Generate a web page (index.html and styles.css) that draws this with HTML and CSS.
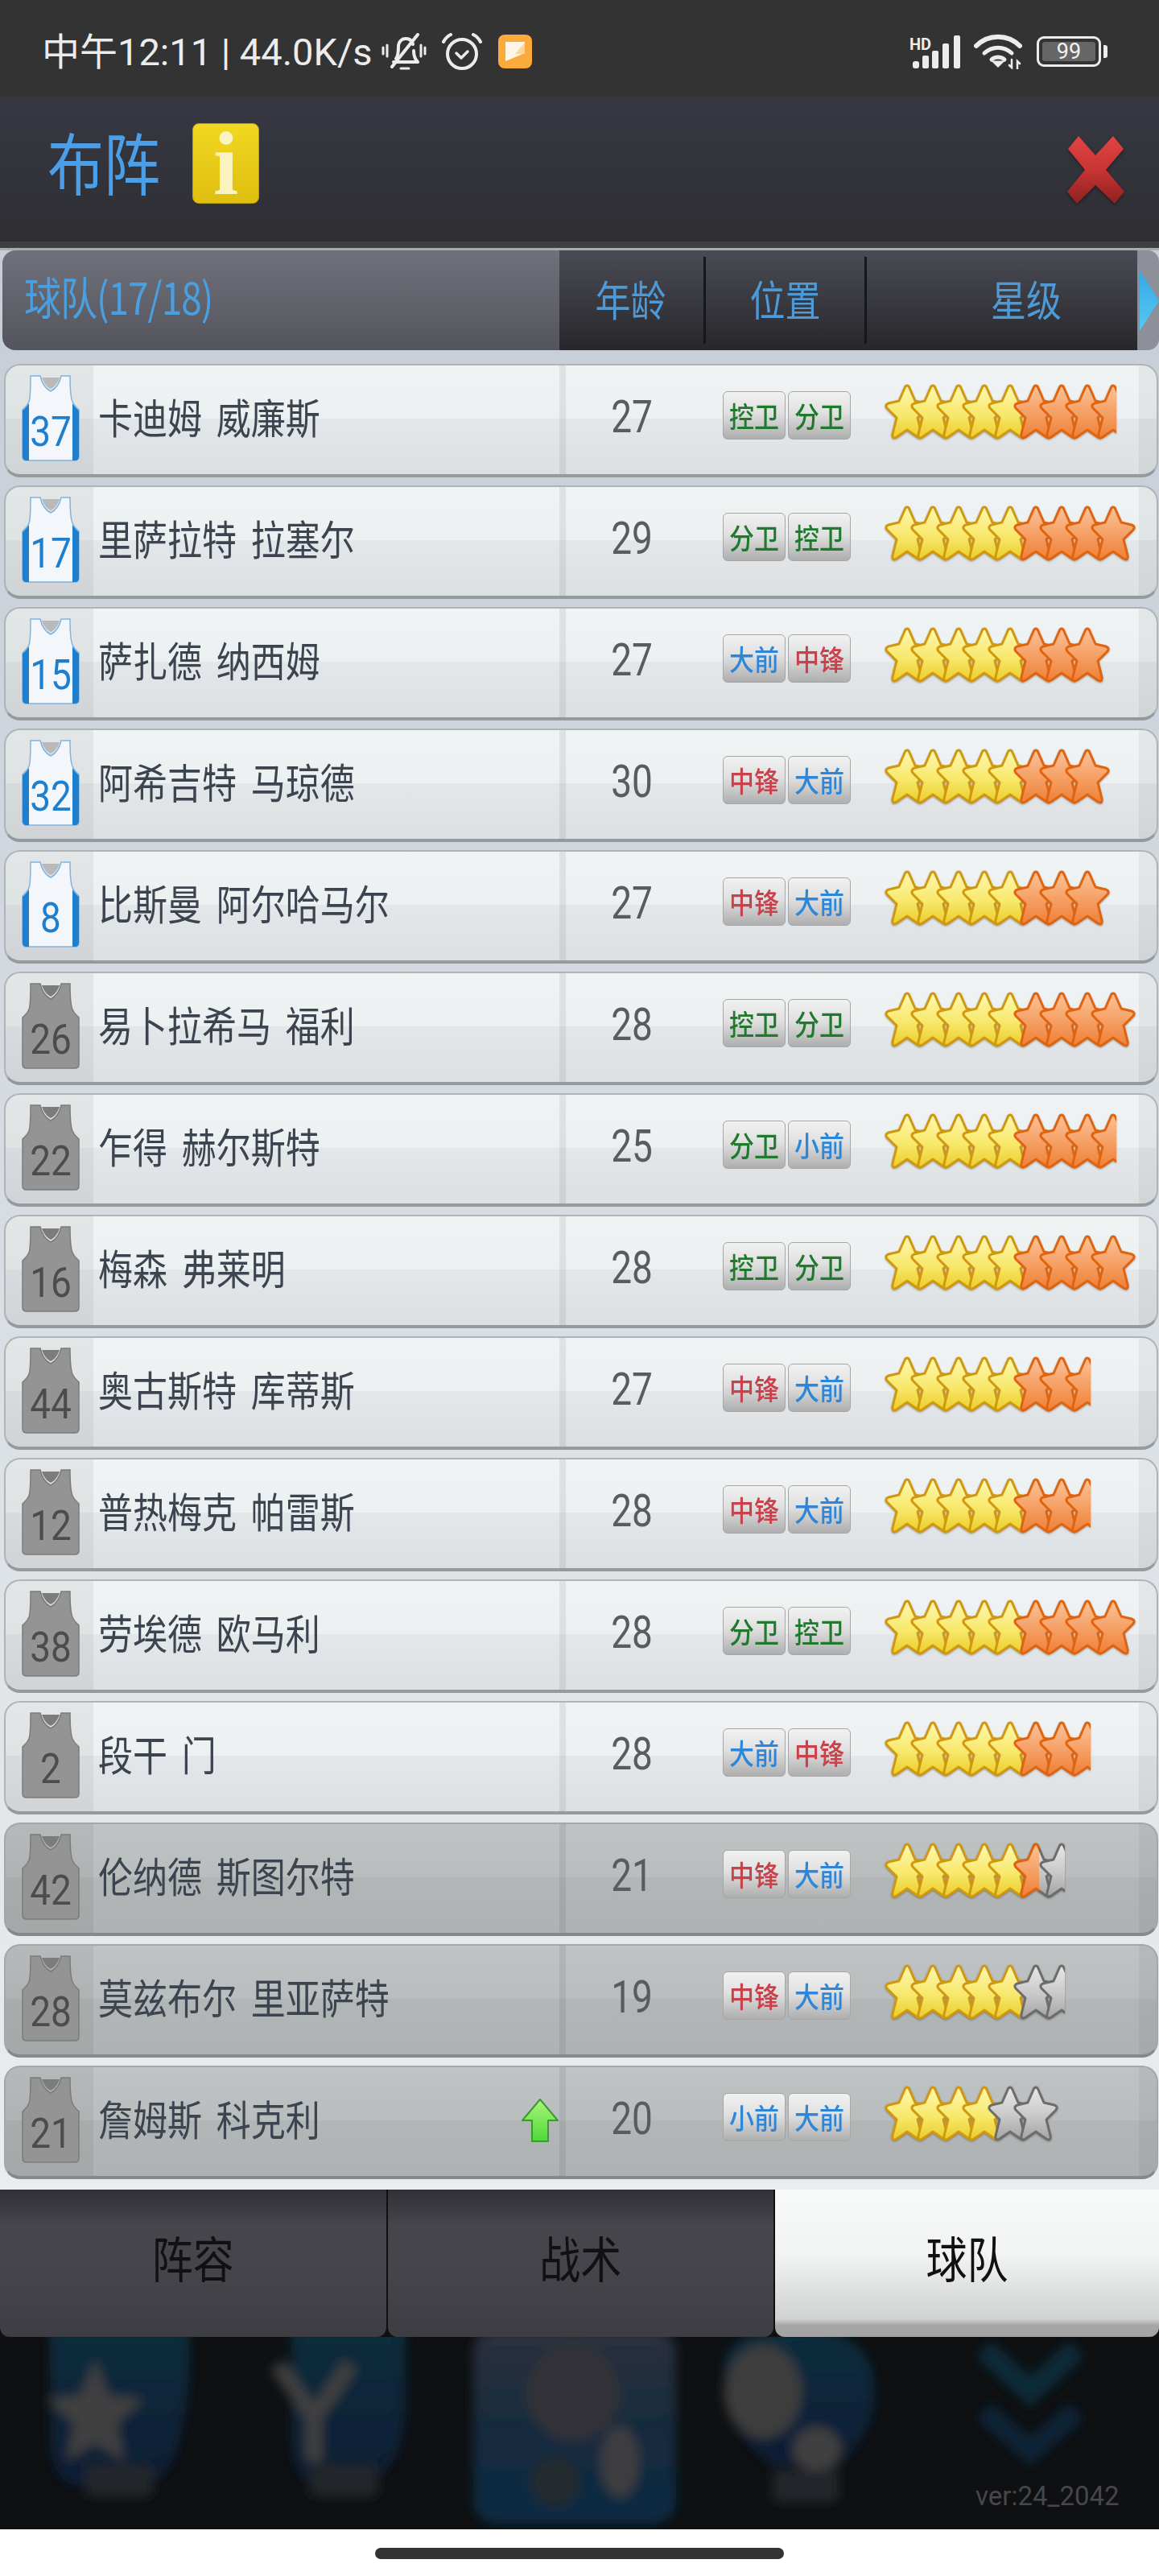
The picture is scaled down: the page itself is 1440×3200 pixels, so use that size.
FILE: index.html
```html
<!DOCTYPE html>
<html lang="zh-CN">
<head>
    <meta charset="UTF-8">
    <meta name="viewport" content="width=device-width, initial-scale=1.0">
    <title>布阵</title>
    <link rel="stylesheet" href="styles.css">
</head>
<body>
    <!-- shared star and jersey shapes -->
    <svg class="defs" width="0" height="0">
        <defs>
            <linearGradient id="gy" x1="0" y1="0" x2="0" y2="1"><stop offset="0" stop-color="#fef8ae"/><stop offset=".55" stop-color="#f8e86c"/><stop offset="1" stop-color="#ebcd2a"/></linearGradient>
            <linearGradient id="go" x1="0" y1="0" x2="0" y2="1"><stop offset="0" stop-color="#fcc298"/><stop offset=".55" stop-color="#f59e62"/><stop offset="1" stop-color="#ee8038"/></linearGradient>
            <linearGradient id="gg" x1="0" y1="0" x2="0" y2="1"><stop offset="0" stop-color="#e8e8e8"/><stop offset=".55" stop-color="#c8c8c8"/><stop offset="1" stop-color="#a4a4a4"/></linearGradient>
            <clipPath id="half"><rect x="-2" y="-2" width="33" height="74"/></clipPath>
            <path id="star" d="M27 1Q29 1 30 4L37 20L50 23Q55 25 52 29L40 41L45 61Q46 68 40 65L27 56L14 65Q8 68 9 61L14 41L2 29Q-1 25 4 23L17 20L24 4Q25 1 27 1Z" stroke-width="3" stroke-linejoin="round"/>
            <use id="sy" href="#star" fill="url(#gy)" stroke="#d09810"/>
            <use id="so" href="#star" fill="url(#go)" stroke="#e0640f"/>
            <use id="sg" href="#star" fill="url(#gg)" stroke="#6c6c6c"/>
            <use id="ho" href="#so" clip-path="url(#half)"/>
            <use id="hg" href="#sg" clip-path="url(#half)"/>
            <g id="y4"><use href="#sy"/><use href="#sy" x="32"/><use href="#sy" x="64"/><use href="#sy" x="96"/></g>
            <g id="y5"><use href="#y4"/><use href="#sy" x="128"/></g>
            <g id="o2"><use href="#so" x="160"/><use href="#so" x="192"/></g>
            <g id="o3"><use href="#o2"/><use href="#so" x="224"/></g>
            <path id="shirt" d="M11 1H23C25 10 30 17 36 20C42 17 47 10 49 1H60C60 18 61 28 63 33C65 38 68 40 71 43V101Q71 106 66 106H6Q1 106 1 101V43C4 40 7 38 9 33C11 28 11 18 11 1Z"/>
            <path id="neck" d="M25 3H47C45 9 41 15 36 17C31 15 27 9 25 3Z"/>
            <g id="jw">
                <use href="#shirt" fill="#f3f7fb" stroke="#7fb4e2" stroke-width="1.5"/>
                <use href="#neck" fill="#b9b9b9"/>
                <path d="M1 44C4 41 6 39 9 35V106H6Q1 106 1 101ZM71 44C68 41 66 39 63 35V106H66Q71 106 71 101Z" fill="#1f7fcf"/>
            </g>
            <g id="jg">
                <use href="#shirt" fill="#949494" stroke="#7b7b7b" stroke-width="1.5"/>
                <use href="#neck" fill="#7c7c7c"/>
            </g>
        </defs>
    </svg>

    <div class="status">
        <div class="status-left">
            <span class="clock">中午12:11 | 44.0K/s</span>
            <svg class="ic-bell" viewBox="0 0 56 46" fill="none" stroke="#ececec" stroke-width="4" stroke-linecap="round" stroke-linejoin="round">
                <path d="M18 32C21 28 21 22 21 17C21 11 25 7 30 7C35 7 38 10 39 14M40 22C40 27 41 32 45 36H15"/>
                <path d="M24 44H34" stroke-width="3"/>
                <path d="M45 2L13 42"/>
                <path d="M2 18V26M7 15V29M49 15V29M54 18V26" stroke-width="3"/>
            </svg>
            <svg class="ic-alarm" viewBox="0 0 50 47" fill="none" stroke="#ececec" stroke-width="4" stroke-linecap="round" stroke-linejoin="round">
                <circle cx="25" cy="26" r="18"/>
                <path d="M18 25L24 31L32 23" stroke-width="3.5"/>
                <path d="M2 11C4 7 7 4 11 2M48 11C46 7 43 4 39 2"/>
            </svg>
            <svg class="ic-note" viewBox="0 0 42 42">
                <rect width="42" height="42" rx="8" fill="#fdaa3c"/>
                <path d="M9 9H33V23L9 33Z" fill="#fdf6e6"/>
                <path d="M33 10V24H21Z" fill="#fcd59a"/>
            </svg>
        </div>
        <div class="status-right">
            <svg class="ic-signal" viewBox="0 0 64 42" fill="#ececec">
                <text class="hd" x="0" y="19">HD</text>
                <rect x="4" y="33" width="8" height="9" rx="3"/>
                <rect x="16" y="26" width="8" height="16" rx="2"/>
                <rect x="28" y="20" width="8" height="22" rx="2"/>
                <rect x="41" y="11" width="8" height="31" rx="2"/>
                <rect x="55" y="1" width="8" height="41" rx="2"/>
            </svg>
            <svg class="ic-wifi" viewBox="0 0 60 44" fill="none" stroke="#ececec" stroke-linecap="round">
                <path d="M3 15C18 0 42 0 57 15" stroke-width="6"/>
                <path d="M13 24C23 15 37 15 47 24" stroke-width="5"/>
                <path d="M22 32C26 28 34 28 38 32" stroke-width="5"/>
                <path d="M30 40L25 35H35Z" fill="#ececec" stroke-width="3"/>
                <path d="M47 32V42L44 39M54 44V34L57 37" stroke-width="2.5"/>
            </svg>
            <div class="battery"><span class="battery-level">99</span></div>
            <div class="battery-nub"></div>
        </div>
    </div>

    <div class="topbar">
        <h1 class="title"><span class="tall">布阵</span></h1>
        <div class="info"><span>i</span></div>
        <svg class="close" viewBox="0 0 71 86">
            <defs><linearGradient id="gx" x1="0" y1="0" x2="0" y2="1"><stop offset="0" stop-color="#e24343"/><stop offset=".5" stop-color="#c93434"/><stop offset="1" stop-color="#8e2020"/></linearGradient></defs>
            <polygon points="14,1 35,25 57,1 70,17 48,43 71,70 59,85 35,62 12,85 0,70 22,43 1,17" fill="url(#gx)"/>
        </svg>
    </div>

    <div class="panel">
        <div class="thead">
            <div class="thead-title"><span class="tall">球队(17/18)</span></div>
            <div class="thead-cols">
                <div class="th th-age"><span class="tall">年龄</span></div>
                <div class="th th-pos"><span class="tall">位置</span></div>
                <div class="th th-star"><span class="tall">星级</span></div>
            </div>
            <div class="thead-end"><div class="arrow"></div></div>
        </div>

        <div class="rows">
            <div class="row">
                <div class="c-jersey"><svg class="jersey on" viewBox="0 0 72 107"><use href="#jw"/><text>37</text></svg></div>
                <div class="c-name"><span class="tall">卡迪姆 威廉斯</span></div>
                <div class="c-age"><span class="tall">27</span></div>
                <div class="c-tags"><span class="tag green"><b>控卫</b></span><span class="tag green"><b>分卫</b></span></div>
                <div class="c-stars"><svg class="stars" viewBox="0 0 322 70"><use href="#y5"/><use href="#o3"/><use href="#ho" x="256"/></svg></div>
            </div>
            <div class="row">
                <div class="c-jersey"><svg class="jersey on" viewBox="0 0 72 107"><use href="#jw"/><text>17</text></svg></div>
                <div class="c-name"><span class="tall">里萨拉特 拉塞尔</span></div>
                <div class="c-age"><span class="tall">29</span></div>
                <div class="c-tags"><span class="tag green"><b>分卫</b></span><span class="tag green"><b>控卫</b></span></div>
                <div class="c-stars"><svg class="stars" viewBox="0 0 322 70"><use href="#y5"/><use href="#o3"/><use href="#so" x="256"/></svg></div>
            </div>
            <div class="row">
                <div class="c-jersey"><svg class="jersey on" viewBox="0 0 72 107"><use href="#jw"/><text>15</text></svg></div>
                <div class="c-name"><span class="tall">萨扎德 纳西姆</span></div>
                <div class="c-age"><span class="tall">27</span></div>
                <div class="c-tags"><span class="tag blue"><b>大前</b></span><span class="tag red"><b>中锋</b></span></div>
                <div class="c-stars"><svg class="stars" viewBox="0 0 322 70"><use href="#y5"/><use href="#o3"/></svg></div>
            </div>
            <div class="row">
                <div class="c-jersey"><svg class="jersey on" viewBox="0 0 72 107"><use href="#jw"/><text>32</text></svg></div>
                <div class="c-name"><span class="tall">阿希吉特 马琼德</span></div>
                <div class="c-age"><span class="tall">30</span></div>
                <div class="c-tags"><span class="tag red"><b>中锋</b></span><span class="tag blue"><b>大前</b></span></div>
                <div class="c-stars"><svg class="stars" viewBox="0 0 322 70"><use href="#y5"/><use href="#o3"/></svg></div>
            </div>
            <div class="row">
                <div class="c-jersey"><svg class="jersey on" viewBox="0 0 72 107"><use href="#jw"/><text>8</text></svg></div>
                <div class="c-name"><span class="tall">比斯曼 阿尔哈马尔</span></div>
                <div class="c-age"><span class="tall">27</span></div>
                <div class="c-tags"><span class="tag red"><b>中锋</b></span><span class="tag blue"><b>大前</b></span></div>
                <div class="c-stars"><svg class="stars" viewBox="0 0 322 70"><use href="#y5"/><use href="#o3"/></svg></div>
            </div>
            <div class="row">
                <div class="c-jersey"><svg class="jersey" viewBox="0 0 72 107"><use href="#jg"/><text>26</text></svg></div>
                <div class="c-name"><span class="tall">易卜拉希马 福利</span></div>
                <div class="c-age"><span class="tall">28</span></div>
                <div class="c-tags"><span class="tag green"><b>控卫</b></span><span class="tag green"><b>分卫</b></span></div>
                <div class="c-stars"><svg class="stars" viewBox="0 0 322 70"><use href="#y5"/><use href="#o3"/><use href="#so" x="256"/></svg></div>
            </div>
            <div class="row">
                <div class="c-jersey"><svg class="jersey" viewBox="0 0 72 107"><use href="#jg"/><text>22</text></svg></div>
                <div class="c-name"><span class="tall">乍得 赫尔斯特</span></div>
                <div class="c-age"><span class="tall">25</span></div>
                <div class="c-tags"><span class="tag green"><b>分卫</b></span><span class="tag blue"><b>小前</b></span></div>
                <div class="c-stars"><svg class="stars" viewBox="0 0 322 70"><use href="#y5"/><use href="#o3"/><use href="#ho" x="256"/></svg></div>
            </div>
            <div class="row">
                <div class="c-jersey"><svg class="jersey" viewBox="0 0 72 107"><use href="#jg"/><text>16</text></svg></div>
                <div class="c-name"><span class="tall">梅森 弗莱明</span></div>
                <div class="c-age"><span class="tall">28</span></div>
                <div class="c-tags"><span class="tag green"><b>控卫</b></span><span class="tag green"><b>分卫</b></span></div>
                <div class="c-stars"><svg class="stars" viewBox="0 0 322 70"><use href="#y5"/><use href="#o3"/><use href="#so" x="256"/></svg></div>
            </div>
            <div class="row">
                <div class="c-jersey"><svg class="jersey" viewBox="0 0 72 107"><use href="#jg"/><text>44</text></svg></div>
                <div class="c-name"><span class="tall">奥古斯特 库蒂斯</span></div>
                <div class="c-age"><span class="tall">27</span></div>
                <div class="c-tags"><span class="tag red"><b>中锋</b></span><span class="tag blue"><b>大前</b></span></div>
                <div class="c-stars"><svg class="stars" viewBox="0 0 322 70"><use href="#y5"/><use href="#o2"/><use href="#ho" x="224"/></svg></div>
            </div>
            <div class="row">
                <div class="c-jersey"><svg class="jersey" viewBox="0 0 72 107"><use href="#jg"/><text>12</text></svg></div>
                <div class="c-name"><span class="tall">普热梅克 帕雷斯</span></div>
                <div class="c-age"><span class="tall">28</span></div>
                <div class="c-tags"><span class="tag red"><b>中锋</b></span><span class="tag blue"><b>大前</b></span></div>
                <div class="c-stars"><svg class="stars" viewBox="0 0 322 70"><use href="#y5"/><use href="#o2"/><use href="#ho" x="224"/></svg></div>
            </div>
            <div class="row">
                <div class="c-jersey"><svg class="jersey" viewBox="0 0 72 107"><use href="#jg"/><text>38</text></svg></div>
                <div class="c-name"><span class="tall">劳埃德 欧马利</span></div>
                <div class="c-age"><span class="tall">28</span></div>
                <div class="c-tags"><span class="tag green"><b>分卫</b></span><span class="tag green"><b>控卫</b></span></div>
                <div class="c-stars"><svg class="stars" viewBox="0 0 322 70"><use href="#y5"/><use href="#o3"/><use href="#so" x="256"/></svg></div>
            </div>
            <div class="row">
                <div class="c-jersey"><svg class="jersey" viewBox="0 0 72 107"><use href="#jg"/><text>2</text></svg></div>
                <div class="c-name"><span class="tall">段干 门</span></div>
                <div class="c-age"><span class="tall">28</span></div>
                <div class="c-tags"><span class="tag blue"><b>大前</b></span><span class="tag red"><b>中锋</b></span></div>
                <div class="c-stars"><svg class="stars" viewBox="0 0 322 70"><use href="#y5"/><use href="#o2"/><use href="#ho" x="224"/></svg></div>
            </div>
            <div class="row off">
                <div class="c-jersey"><svg class="jersey" viewBox="0 0 72 107"><use href="#jg"/><text>42</text></svg></div>
                <div class="c-name"><span class="tall">伦纳德 斯图尔特</span></div>
                <div class="c-age"><span class="tall">21</span></div>
                <div class="c-tags"><span class="tag red"><b>中锋</b></span><span class="tag blue"><b>大前</b></span></div>
                <div class="c-stars"><svg class="stars" viewBox="0 0 322 70"><use href="#y5"/><use href="#sg" x="160"/><use href="#ho" x="160"/><use href="#hg" x="192"/></svg></div>
            </div>
            <div class="row off">
                <div class="c-jersey"><svg class="jersey" viewBox="0 0 72 107"><use href="#jg"/><text>28</text></svg></div>
                <div class="c-name"><span class="tall">莫兹布尔 里亚萨特</span></div>
                <div class="c-age"><span class="tall">19</span></div>
                <div class="c-tags"><span class="tag red"><b>中锋</b></span><span class="tag blue"><b>大前</b></span></div>
                <div class="c-stars"><svg class="stars" viewBox="0 0 322 70"><use href="#y5"/><use href="#sg" x="160"/><use href="#hg" x="192"/></svg></div>
            </div>
            <div class="row off">
                <div class="c-jersey"><svg class="jersey" viewBox="0 0 72 107"><use href="#jg"/><text>21</text></svg></div>
                <div class="c-name">
                    <span class="tall">詹姆斯 科克利</span>
                    <svg class="up" viewBox="0 0 48 56">
                        <defs><linearGradient id="gu" x1="0" y1="0" x2="0" y2="1"><stop offset="0" stop-color="#a8f57a"/><stop offset="1" stop-color="#4fd93a"/></linearGradient></defs>
                        <path d="M24 2L46 28H34V54H14V28H2Z" fill="url(#gu)" stroke="#3b9a33" stroke-width="2" stroke-linejoin="round"/>
                    </svg>
                </div>
                <div class="c-age"><span class="tall">20</span></div>
                <div class="c-tags"><span class="tag blue"><b>小前</b></span><span class="tag blue"><b>大前</b></span></div>
                <div class="c-stars"><svg class="stars" viewBox="0 0 322 70"><use href="#y4"/><use href="#sg" x="128"/><use href="#sg" x="160"/></svg></div>
            </div>
        </div>
    </div>

    <div class="tabs">
        <div class="tab"><span class="tall">阵容</span></div>
        <div class="tab"><span class="tall">战术</span></div>
        <div class="tab active"><span class="tall">球队</span></div>
    </div>

    <div class="backdrop">
        <!-- blurred main menu behind the dialog -->
        <svg class="menu" viewBox="0 0 1440 239">
            <defs><filter id="blur" x="-10%" y="-10%" width="120%" height="120%"><feGaussianBlur stdDeviation="7"/></filter>
            <linearGradient id="gp" x1="0" y1="0" x2="0" y2="1"><stop offset="0" stop-color="#2c303c"/><stop offset=".5" stop-color="#172c3e"/><stop offset="1" stop-color="#0a2a44"/></linearGradient>
            <linearGradient id="gb" x1="0" y1="0" x2="0" y2="1"><stop offset="0" stop-color="#0b2e3e"/><stop offset="1" stop-color="#091c34"/></linearGradient></defs>
            <g filter="url(#blur)">
                <path d="M62 -10H235V50Q225 185 175 185H100Q62 185 62 120Z" fill="url(#gb)"/>
                <polygon points="118,28 135,72 178,78 145,108 155,155 118,132 82,155 92,108 58,78 100,72" fill="#3f3f3f"/>
                <rect x="105" y="158" width="85" height="40" rx="8" fill="#22252a"/>
                <path d="M362 -10H504V90Q500 185 430 185H400Q362 185 362 120Z" fill="url(#gb)"/>
                <path d="M345 35L390 100L435 35M390 100V155" fill="none" stroke="#3f3f3f" stroke-width="20"/>
                <rect x="385" y="158" width="85" height="40" rx="8" fill="#22252a"/>
                <rect x="588" y="-10" width="252" height="242" rx="28" fill="url(#gp)"/>
                <ellipse cx="712" cy="70" rx="58" ry="60" fill="#303338"/>
                <ellipse cx="770" cy="155" rx="24" ry="44" fill="#3c3e40"/>
                <ellipse cx="690" cy="180" rx="30" ry="32" fill="#23292f"/>
                <path d="M900 40Q900 -10 990 -10Q1087 -10 1087 70Q1087 120 1040 160H960Q900 120 900 40Z" fill="url(#gb)"/>
                <ellipse cx="948" cy="68" rx="48" ry="58" fill="#3e3e3e"/>
                <ellipse cx="1015" cy="140" rx="30" ry="28" fill="#404040"/>
                <rect x="960" y="165" width="82" height="40" rx="8" fill="#22252a"/>
                <path d="M1222 15L1280 68L1338 15" fill="none" stroke="#0a2c38" stroke-width="28"/>
                <path d="M1222 92L1280 142L1338 92" fill="none" stroke="#092434" stroke-width="28"/>
            </g>
        </svg>
        <span class="version">ver:24_2042</span>
    </div>

    <div class="homebar"><div class="pill"></div></div>
</body>
</html>
```

FILE: styles.css
```css
* {
    box-sizing: border-box;
}

body {
    margin: 0;
    width: 1440px;
    height: 3200px;
    overflow: hidden;
    background: #fff;
    font-family: "Noto Sans CJK SC", "Noto Sans", sans-serif;
}

.defs {
    position: absolute;
}

/* the game stretches its text vertically */
.tall {
    display: inline-block;
    transform: scaleY(1.2);
    white-space: nowrap;
}

/* status bar */
.status {
    height: 120px;
    background: #333;
    display: flex;
    justify-content: space-between;
    align-items: center;
    padding: 8px 64px 0 52px;
    color: #ececec;
}

.status-left, .status-right {
    display: flex;
    align-items: center;
}

.clock {
    font-family: Roboto, "Noto Sans CJK SC", sans-serif;
    font-size: 47px;
    line-height: 1;
    white-space: nowrap;
}

.ic-bell {
    width: 56px;
    height: 46px;
    margin-left: 11px;
}

.ic-alarm {
    width: 50px;
    height: 47px;
    margin-left: 19px;
}

.ic-note {
    width: 42px;
    height: 42px;
    margin-left: 20px;
}

.ic-signal {
    width: 64px;
    height: 42px;
}

.hd {
    font-family: Roboto, sans-serif;
    font-size: 20px;
    font-weight: 700;
}

.ic-wifi {
    width: 60px;
    height: 44px;
    margin-left: 16px;
}

.battery {
    width: 80px;
    height: 38px;
    margin-left: 18px;
    border: 3px solid #ececec;
    border-radius: 9px;
    padding: 4px;
}

.battery-level {
    display: block;
    height: 100%;
    background: #666;
    border-radius: 3px;
    text-align: center;
    font-family: Roboto, sans-serif;
    font-size: 27px;
    line-height: 24px;
    color: #f2f2f2;
}

.battery-nub {
    width: 5px;
    height: 16px;
    margin-left: 3px;
    background: #ececec;
    border-radius: 0 3px 3px 0;
}

/* dialog title */
.topbar {
    height: 188px;
    background: linear-gradient(#383843 0, #2e2e33 96%, #3b4042 96%, #3b4042 100%);
    display: flex;
    align-items: flex-start;
    padding: 33px 43px 0 59px;
}

.title {
    margin: 0;
    width: 180px;
    font-size: 70px;
    font-weight: 400;
    line-height: 94px;
    color: #4a9fe8;
}

.info {
    width: 83px;
    height: 100px;
    background: linear-gradient(#f2d822, #dfbe10);
    border-radius: 8px;
    border: 1px solid #b89c10;
    display: flex;
    justify-content: center;
    align-items: center;
    font-family: "Liberation Serif", serif;
    font-size: 112px;
    font-weight: 700;
    line-height: 1;
    color: #fbf3bf;
}

.close {
    width: 71px;
    height: 86px;
    margin: 15px 0 0 auto;
    filter: drop-shadow(0 2px 2px rgba(0, 0, 0, .4));
}

/* player list */
.panel {
    height: 2412px;
    background: linear-gradient(#c6cdd6 0, #e9edef 100%);
    border-top: 3px solid #a9abab;
    padding: 0 1px 0 5px;
}

.thead {
    height: 124px;
    margin: 0 -1px 17px -2px;
    display: flex;
}

.thead-title {
    width: 692px;
    background: linear-gradient(#70717a, #53545c);
    border-radius: 16px 0 0 16px;
    padding-left: 27px;
    font-size: 46px;
    letter-spacing: -1px;
    line-height: 112px;
    color: #4a9fe0;
}

.thead-cols {
    width: 718px;
    background: linear-gradient(#4b4b55, #27272b);
    display: flex;
    padding: 8px 0;
    color: #4d9ad6;
    font-size: 44px;
}

.th {
    display: flex;
    justify-content: center;
    align-items: center;
    padding-bottom: 6px;
    border-right: 3px solid #14171e;
}

.th-age {
    width: 182px;
    padding-right: 2px;
}

.th-pos {
    width: 200px;
}

.th-star {
    flex: 1;
    padding-left: 60px;
    border-right: 0;
}

.thead-end {
    width: 27px;
    background: #8d8f99;
    border-radius: 0 14px 14px 0;
    padding: 25px 0 0 3px;
}

.arrow {
    width: 24px;
    height: 75px;
    background: linear-gradient(#35a7e6, #57c9f2);
    clip-path: polygon(0 0, 100% 50%, 0 100%);
}

.rows {
    display: flex;
    flex-direction: column;
    gap: 10px;
}

.row {
    height: 141px;
    display: grid;
    grid-template-columns: 109px 579px 172px 233px 1fr;
    border: 2px solid #aeb4b8;
    border-bottom: 4px solid #949a9e;
    border-radius: 20px;
    overflow: hidden;
    background: linear-gradient(#f0f3f4 0, #ecf0f1 49%, #e4e7e9 49%, #dde0e2 100%);
}

.row.off {
    border-color: #a3a7a8;
    border-bottom-color: #85898a;
    background: linear-gradient(#c0c3c3 0, #b9bdbe 49%, #b2b6b7 49%, #aeb2b3 100%);
}

.c-jersey {
    background: rgba(0, 0, 0, .05);
    padding: 0 0 4px 20px;
    display: flex;
    align-items: center;
}

.jersey {
    width: 72px;
    height: 107px;
}

.jersey text {
    font-family: Roboto, sans-serif;
    font-size: 46px;
    text-anchor: middle;
    fill: #4c4c4c;
    transform: translate(36px, 88px) scaleY(1.12);
}

.jersey.on text {
    fill: #1f7fcf;
}

.c-name {
    display: flex;
    justify-content: space-between;
    align-items: center;
    padding: 0 0 12px 6px;
    font-size: 43px;
    word-spacing: 8px;
    color: #3c4450;
}

.up {
    width: 48px;
    height: 56px;
    margin: 8px 0 0;
}

.c-age {
    display: flex;
    justify-content: center;
    align-items: center;
    border-left: 8px solid rgba(0, 0, 0, .07);
    padding-bottom: 8px;
    font-family: Roboto, sans-serif;
    font-size: 46px;
    color: #565c60;
}

.c-tags {
    display: flex;
    align-items: center;
    gap: 3px;
    padding: 0 0 12px 31px;
}

.tag {
    width: 78px;
    height: 60px;
    display: flex;
    justify-content: center;
    align-items: center;
    background: linear-gradient(#f1f1f1, #e0e0e0 45%, #aeaeae);
    border: 1px solid #a6a6a6;
    border-radius: 6px;
    font-size: 31px;
    white-space: nowrap;
}

.tag b {
    display: inline-block;
    font-weight: 500;
    transform: scaleY(1.15);
}

.green {
    color: #1f7a2e;
}

.red {
    color: #c8424c;
}

.blue {
    color: #2e86d8;
}

.c-stars {
    display: flex;
    align-items: center;
    padding-bottom: 17px;
    background: linear-gradient(to left, rgba(0, 0, 0, .05) 22px, transparent 22px);
}

.stars {
    width: 322px;
    height: 70px;
    overflow: visible;
    filter: drop-shadow(0 1px 1px rgba(0, 0, 0, .3));
}

/* bottom tabs */
.tabs {
    height: 183px;
    display: flex;
    background: #0e1012;
    gap: 2px;
}

.tab {
    flex: 1;
    display: flex;
    justify-content: center;
    align-items: center;
    padding-bottom: 16px;
    background: linear-gradient(#323036 0, #47464d 25%, #45444a 60%, #3e3d43 100%);
    border-radius: 0 0 12px 12px;
    font-size: 51px;
    color: #111;
}

.tab.active {
    flex: none;
    width: 477px;
    background: linear-gradient(#f8faf9 0, #f1f3f2 45%, #d0d2d1 88%, #a6a6a6 92%, #a3a3a3 100%);
}

/* blurred menu */
.backdrop {
    position: relative;
    height: 239px;
    background: #0e1012;
    overflow: hidden;
}

.menu {
    display: block;
    width: 1440px;
    height: 239px;
}

.version {
    position: absolute;
    left: 1212px;
    top: 178px;
    font-family: Roboto, sans-serif;
    font-size: 33px;
    line-height: 40px;
    color: #45474a;
    white-space: nowrap;
}

.homebar {
    height: 58px;
    padding-top: 23px;
    background: #fff;
}

.pill {
    width: 508px;
    height: 14px;
    margin: 0 auto;
    background: #333;
    border-radius: 7px;
}
```
